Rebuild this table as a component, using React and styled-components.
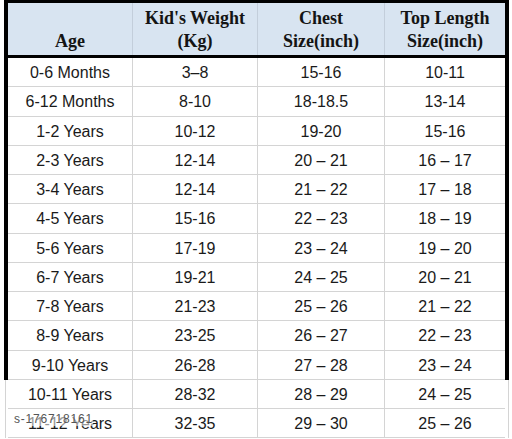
import React from 'react';
import styled, { createGlobalStyle } from 'styled-components';

const rows = [
  ['0-6 Months', '3–8', '15-16', '10-11'],
  ['6-12 Months', '8-10', '18-18.5', '13-14'],
  ['1-2 Years', '10-12', '19-20', '15-16'],
  ['2-3 Years', '12-14', '20 – 21', '16 – 17'],
  ['3-4 Years', '12-14', '21 – 22', '17 – 18'],
  ['4-5 Years', '15-16', '22 – 23', '18 – 19'],
  ['5-6 Years', '17-19', '23 – 24', '19 – 20'],
  ['6-7 Years', '19-21', '24 – 25', '20 – 21'],
  ['7-8 Years', '21-23', '25 – 26', '21 – 22'],
  ['8-9 Years', '23-25', '26 – 27', '22 – 23'],
  ['9-10 Years', '26-28', '27 – 28', '23 – 24'],
];

const loose = [
  ['10-11 Years', '28-32', '28 – 29', '24 – 25'],
  ['11-12 Years', '32-35', '29 – 30', '25 – 26'],
];

const GlobalStyle = createGlobalStyle`
  body {
    margin: 0;
    background: #fff;
    font-family: 'Liberation Sans', Arial, sans-serif;
  }
`;

const Sheet = styled.div`
  width: 512px;
  height: 439px;
  overflow: hidden;
`;

const Frame = styled.div`
  margin-left: 4px;
  width: 505px;
  box-sizing: border-box;
  border-top: 3px solid #000;
  border-left: 4px solid #000;
  border-right: 4px solid #000;
`;

const Loose = styled.div`
  margin-left: 5px;
  width: 504px;
  box-sizing: border-box;
  border-left: 1px solid #d4d4d4;
  border-right: 1px solid #d4d4d4;
  padding: 0 3px 0 2px;
`;

const Grid = styled.div`
  display: grid;
  grid-template-columns: 125px 125px 127px 120px;
`;

const Head = styled(Grid)`
  height: 52px;
  background: #d8e4f1;
  border-bottom: 3px solid #000;
`;

const HeadCell = styled.div`
  display: flex;
  align-items: flex-end;
  justify-content: center;
  padding-bottom: 2px;
  text-align: center;
  font-family: 'Liberation Serif', 'Times New Roman', serif;
  font-weight: bold;
  font-size: 18px;
  line-height: 23px;
  color: #141414;
  border-right: 1px solid #c3cedb;
  &:last-child {
    border-right: none;
  }
`;

const Row = styled(Grid)`
  height: 29.25px;
  box-sizing: border-box;
  border-bottom: 1px solid #d4d4d4;
`;

const Cell = styled.div`
  position: relative;
  display: flex;
  align-items: center;
  justify-content: center;
  padding-top: 2px;
  font-size: 16px;
  color: #1a1a1a;
  border-right: 1px solid #d4d4d4;
  &:last-child {
    border-right: none;
  }
`;

const Stamp = styled.span`
  position: absolute;
  left: 6px;
  top: 3px;
  font-size: 12px;
  letter-spacing: 0.8px;
  color: #555;
  background: rgba(255, 255, 255, 0.55);
`;

const App = () => (
  <Sheet>
    <GlobalStyle />
    <Frame>
      <Head>
        <HeadCell>Age</HeadCell>
        <HeadCell>
          Kid's Weight
          <br />
          (Kg)
        </HeadCell>
        <HeadCell>
          Chest
          <br />
          Size(inch)
        </HeadCell>
        <HeadCell>
          Top Length
          <br />
          Size(inch)
        </HeadCell>
      </Head>
      {rows.map((r) => (
        <Row key={r[0]}>
          {r.map((v, i) => (
            <Cell key={i}>{v}</Cell>
          ))}
        </Row>
      ))}
    </Frame>
    <Loose>
      {loose.map((r, n) => (
        <Row key={r[0]}>
          {r.map((v, i) => (
            <Cell key={i}>
              {v}
              {n === 1 && i === 0 && <Stamp>s-176718161</Stamp>}
            </Cell>
          ))}
        </Row>
      ))}
    </Loose>
  </Sheet>
);

export default App;
